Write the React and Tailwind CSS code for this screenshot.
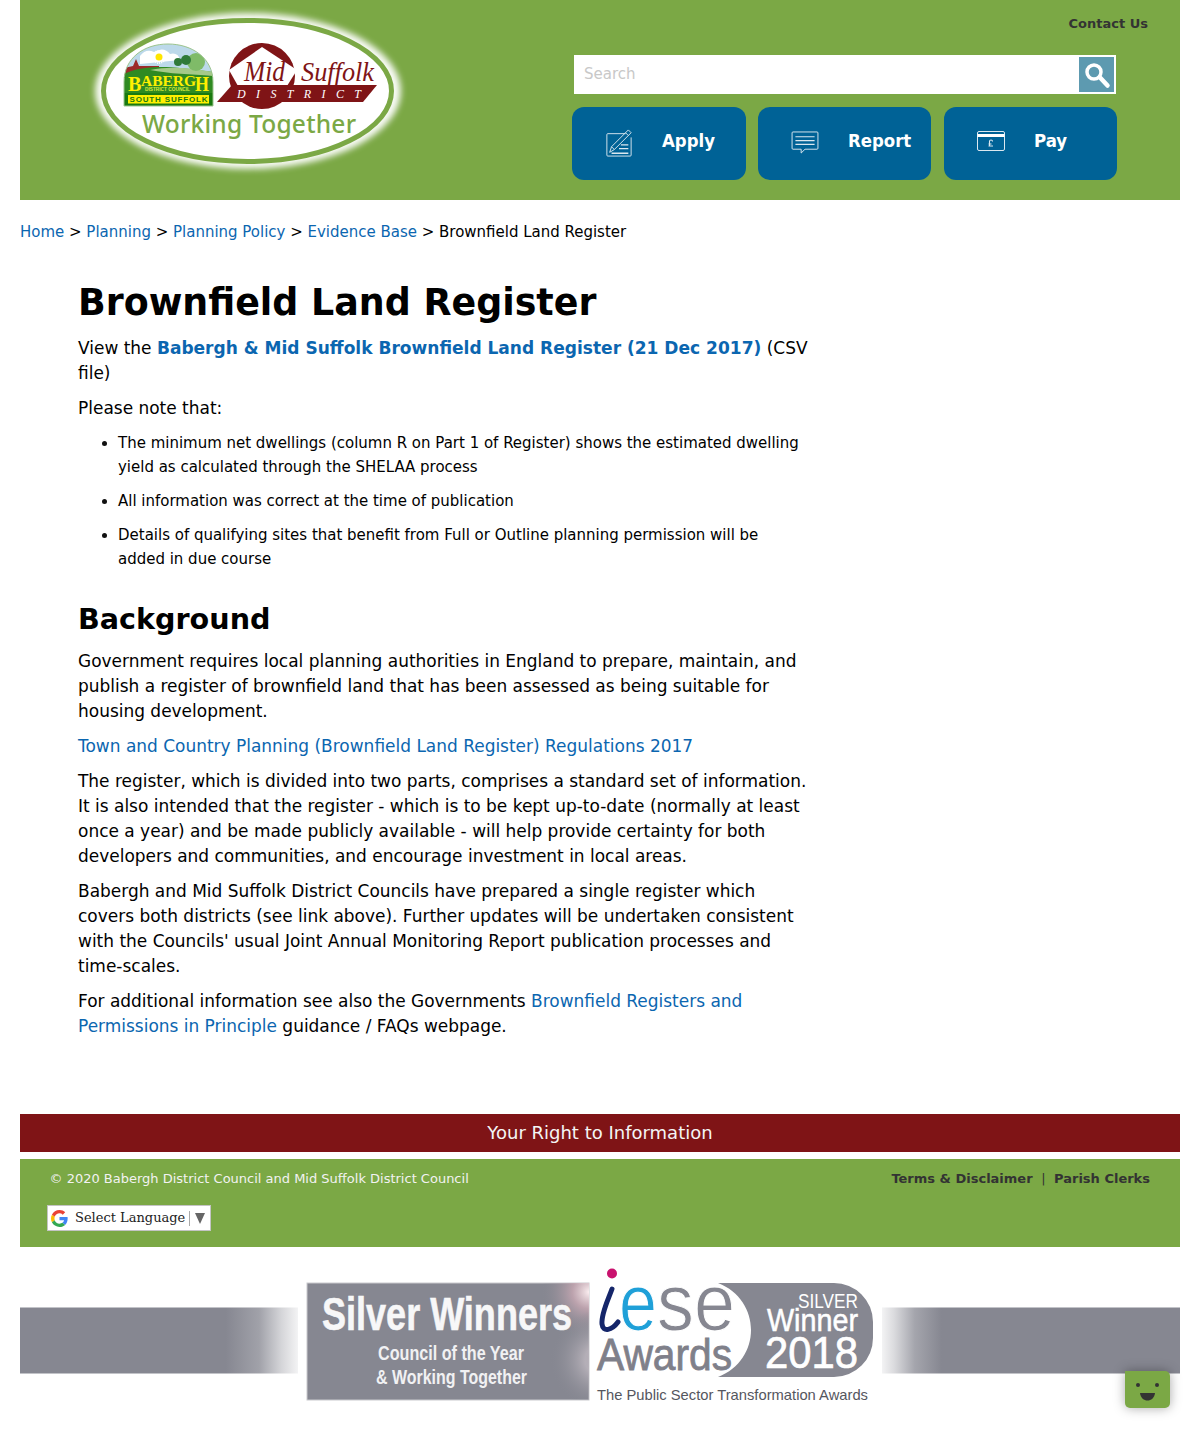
import React from "react";

function Logo() {
  const serif = "'Liberation Serif', serif";
  const sans = "'Liberation Sans', sans-serif";
  return (
    <svg width="320" height="170" viewBox="88 6 320 170" className="block">
      <defs>
        <filter id="glow" x="-10%" y="-15%" width="120%" height="130%">
          <feGaussianBlur stdDeviation="3" />
        </filter>
        <clipPath id="dome">
          <path d="M124 106 L124 82 C124 58 144 44 168 44 C192 44 213 58 213 82 L213 106 Z" />
        </clipPath>
      </defs>
      <ellipse cx="248" cy="91" rx="153" ry="78" fill="#fff" opacity="0.95" filter="url(#glow)" />
      <ellipse cx="247.5" cy="91" rx="144" ry="70.5" fill="#fff" stroke="#7ba845" strokeWidth="5" />

      {/* babergh badge */}
      <g clipPath="url(#dome)">
        <rect x="124" y="44" width="90" height="62" fill="#bcd9ea" />
        <path d="M140 56 q6 -8 14 -4 q10 -6 16 2 q8 -2 10 6 l-40 4 Z" fill="#fff" />
        <path d="M124 68 l9 -2 l3 -7 l3 7 l20 0 l0 6 l-35 6 Z" fill="#9c2a2a" />
        <path d="M124 74 C145 64 170 66 213 72 L213 106 L124 106 Z" fill="#2f8a22" />
        <path d="M150 70 C170 66 190 68 213 72 L213 76 C190 74 170 74 150 70 Z" fill="#a5c989" />
        <circle cx="196" cy="62" r="9" fill="#7fbb68" />
        <circle cx="186" cy="60" r="5" fill="#2f7a39" />
        <circle cx="178" cy="62" r="4" fill="#2f7a39" />
        <circle cx="159" cy="57" r="6" fill="none" stroke="#fff" strokeWidth="2" strokeDasharray="1 1" />
        <circle cx="159" cy="57" r="3.500" fill="#ffe600" />
        <rect x="124" y="93" width="90" height="13" fill="#197a10" />
      </g>
      <path d="M124 106 L124 82 C124 58 144 44 168 44 C192 44 213 58 213 82 L213 106 Z" fill="none" stroke="#9cc48d" strokeWidth="1" />
      <text x="128" y="91" fontFamily={serif} fontWeight="700" fontSize="20" fill="#fff000">B</text>
      <text x="141" y="86" fontFamily={serif} fontWeight="700" fontSize="15" fill="#fff000" textLength="55" lengthAdjust="spacingAndGlyphs">ABERG</text>
      <text x="195" y="91" fontFamily={serif} fontWeight="700" fontSize="20" fill="#fff000" textLength="14" lengthAdjust="spacingAndGlyphs">H</text>
      <text x="145" y="90.500" fontFamily={sans} fontWeight="700" fontSize="4.500" fill="#d9ec3a" textLength="45" lengthAdjust="spacingAndGlyphs">DISTRICT COUNCIL</text>
      <rect x="128" y="95" width="81" height="8.500" fill="#fff000" />
      <text x="129.500" y="102.200" fontFamily={sans} fontWeight="700" fontSize="8" fill="#197a10" textLength="78" lengthAdjust="spacing">SOUTH SUFFOLK</text>

      {/* mid suffolk mark */}
      <circle cx="262" cy="76" r="33" fill="#7f1416" />
      <path d="M262 47 L297 70 L287 86 L238 86 L229 70 Z" fill="#fff" />
      <text x="244" y="81" fontFamily={serif} fontStyle="italic" fontSize="29" fill="#7f1416" textLength="41" lengthAdjust="spacingAndGlyphs">Mid</text>
      <text x="301" y="81" fontFamily={serif} fontStyle="italic" fontSize="27" fill="#7f1416" textLength="73" lengthAdjust="spacingAndGlyphs">Suffolk</text>
      <path d="M217 102 L232 85 L377 85 L363 102 Z" fill="#7f1416" />
      <text x="237" y="98" fontFamily={serif} fontStyle="italic" fontSize="12" fill="#fff" textLength="124" lengthAdjust="spacing">DISTRICT</text>

      <text x="142" y="133" fontFamily="'Noto Sans', sans-serif" fontWeight="500" fontSize="24.500" fill="#7ba845" textLength="214" lengthAdjust="spacing">Working Together</text>
    </svg>
  );
}

function ApplyIcon() {
  return (
    <svg width="28" height="28" viewBox="0 0 30 30" fill="none" stroke="#dbe8f0" strokeWidth="1">
      <path d="M22 5 H3 a1 1 0 0 0 -1 1 V28 a1 1 0 0 0 1 1 H27 a1 1 0 0 0 1 -1 V9" />
      <path d="M25 1 L28 4 L10 22 L5 25 L7 19 Z" />
      <path d="M7 19 L10 22 M22 4 L25 7" />
      <path d="M17 17 H25 M15 21 H25 M7 26 H25" strokeWidth="1.4" />
    </svg>
  );
}

function ReportIcon() {
  return (
    <svg width="28" height="23" viewBox="0 0 28 24" fill="none" stroke="#dbe8f0" strokeWidth="1">
      <path d="M1.5 1 H26.5 a1 1 0 0 1 1 1 V18 a1 1 0 0 1 -1 1 H14 L10 23 V19 H1.5 a1 1 0 0 1 -1 -1 V2 a1 1 0 0 1 1 -1 Z" />
      <path d="M4 6 H24 M4 10 H24 M4 14 H24" strokeWidth="1.3" />
    </svg>
  );
}

function PayIcon() {
  return (
    <svg width="28" height="20" viewBox="0 0 28 20" fill="none" stroke="#dbe8f0" strokeWidth="1">
      <rect x="0.5" y="0.5" width="27" height="19" rx="1.5" />
      <rect x="0.5" y="3" width="27" height="3" fill="#fff" stroke="none" />
      <path d="M15.5 10.5 a1.5 1.5 0 0 0 -3 0 V15 M11.5 13 H14.5 M11.5 15 H16" strokeWidth="1.1" />
    </svg>
  );
}

function ActionButton({ label, icon, width, iconBox }) {
  return (
    <a className={`flex h-[73px] items-center rounded-xl bg-[#006296] ${width}`}>
      <span className={`flex w-[90px] items-center justify-center pl-[3px] ${iconBox}`}>{icon}</span>
      <span className="pb-[6px] text-[18.4px] font-bold text-white [font-family:'DejaVu_Sans_Condensed','DejaVu_Sans',sans-serif] [font-stretch:condensed]">
        {label}
      </span>
    </a>
  );
}

function GoogleG() {
  return (
    <svg width="17" height="17" viewBox="0 0 48 48">
      <path fill="#EA4335" d="M24 9.5c3.5 0 6.700 1.200 9.200 3.600l6.900-6.900C35.900 2.400 30.500 0 24 0 14.600 0 6.500 5.400 2.600 13.200l8 6.200C12.500 13.700 17.800 9.500 24 9.500z" />
      <path fill="#4285F4" d="M47 24.500c0-1.600-.1-3.100-.4-4.500H24v9h12.900c-.6 3-2.300 5.500-4.800 7.200l7.700 6C44.300 37.900 47 31.800 47 24.500z" />
      <path fill="#FBBC05" d="M10.600 28.600c-.5-1.400-.8-3-.8-4.600s.3-3.200.8-4.600l-8-6.200C.9 16.500 0 20.100 0 24s.9 7.500 2.600 10.800l8-6.200z" />
      <path fill="#34A853" d="M24 48c6.500 0 11.900-2.100 15.900-5.800l-7.700-6c-2.100 1.400-4.900 2.300-8.200 2.300-6.200 0-11.500-4.200-13.400-9.900l-8 6.200C6.500 42.600 14.600 48 24 48z" />
    </svg>
  );
}

function AwardsBanner() {
  const cond = "'Liberation Sans', sans-serif";
  return (
    <svg width="1160" height="194" viewBox="20 1247 1160 194" className="block">
      <defs>
        <linearGradient id="fadeL" x1="0" x2="1" y1="0" y2="0">
          <stop offset="0.74" stopColor="#868791" />
          <stop offset="0.86" stopColor="#868791" stopOpacity="0.78" />
          <stop offset="0.94" stopColor="#868791" stopOpacity="0.35" />
          <stop offset="1" stopColor="#868791" stopOpacity="0.1" />
        </linearGradient>
        <linearGradient id="fadeR" x1="1" x2="0" y1="0" y2="0">
          <stop offset="0.8" stopColor="#868791" />
          <stop offset="0.89" stopColor="#868791" stopOpacity="0.75" />
          <stop offset="0.96" stopColor="#868791" stopOpacity="0.3" />
          <stop offset="1" stopColor="#868791" stopOpacity="0.1" />
        </linearGradient>
        <radialGradient id="flare" gradientUnits="userSpaceOnUse" cx="589" cy="1292" r="48">
          <stop offset="0" stopColor="#fbeef0" />
          <stop offset="0.35" stopColor="#c9a9b4" stopOpacity="0.8" />
          <stop offset="1" stopColor="#868791" stopOpacity="0" />
        </radialGradient>
        <radialGradient id="flare2" gradientUnits="userSpaceOnUse" cx="600" cy="1360" r="50">
          <stop offset="0.3" stopColor="#b9b3bb" stopOpacity="0.9" />
          <stop offset="1" stopColor="#868791" stopOpacity="0" />
        </radialGradient>
      </defs>
      <rect x="20" y="1307.500" width="278" height="66" fill="url(#fadeL)" />
      <rect x="882" y="1307.500" width="298" height="66" fill="url(#fadeR)" />

      <rect x="307" y="1283" width="282" height="117" fill="#868791" stroke="#c9c9cd" strokeWidth="1" />
      <rect x="307" y="1283" width="282" height="117" fill="url(#flare)" />
      <rect x="307" y="1283" width="282" height="117" fill="url(#flare2)" />
      <text x="322" y="1330" fontFamily={cond} fontWeight="700" fontSize="46" fill="#f7f7f8" stroke="#f7f7f8" strokeWidth="0.6" textLength="250" lengthAdjust="spacingAndGlyphs">Silver Winners</text>
      <text x="378" y="1360" fontFamily={cond} fontWeight="700" fontSize="20" fill="#f1f1f3" textLength="146" lengthAdjust="spacingAndGlyphs">Council of the Year</text>
      <text x="376" y="1384" fontFamily={cond} fontWeight="700" fontSize="20" fill="#f1f1f3" textLength="151" lengthAdjust="spacingAndGlyphs">&amp; Working Together</text>

      <circle cx="612" cy="1273.500" r="5" fill="#c9126e" />
      <path d="M718 1283 H834 a39 39 0 0 1 39 39 V1338 a39 39 0 0 1 -39 39 H718 C762 1360 762 1300 718 1283 Z" fill="#868791" />
      <path d="M612 1289 C608 1300 601 1314 602 1324 C603 1333 612 1330 618 1322" fill="none" stroke="#15266a" strokeWidth="5" strokeLinecap="round" />
      <text x="619" y="1330" fontFamily={cond} fontSize="80" fill="#1fa0d8" stroke="#fff" strokeWidth="1" textLength="38" lengthAdjust="spacingAndGlyphs">e</text>
      <text x="657" y="1330" fontFamily={cond} fontSize="80" fill="#868791" stroke="#fff" strokeWidth="1" textLength="78" lengthAdjust="spacingAndGlyphs">se</text>
      <text x="597" y="1370" fontFamily={cond} fontSize="44" fill="#7f808a" stroke="#7f808a" strokeWidth="0.8" textLength="135" lengthAdjust="spacingAndGlyphs">Awards</text>

      <text x="798" y="1308" fontFamily={cond} fontSize="20" fill="#fff" textLength="60" lengthAdjust="spacingAndGlyphs">SILVER</text>
      <text x="767" y="1331" fontFamily={cond} fontSize="31" fill="#fff" stroke="#fff" strokeWidth="0.5" textLength="91" lengthAdjust="spacingAndGlyphs">Winner</text>
      <text x="765" y="1368" fontFamily={cond} fontSize="44" fill="#fff" stroke="#fff" strokeWidth="0.7" textLength="93" lengthAdjust="spacingAndGlyphs">2018</text>
      <text x="597" y="1400" fontFamily={cond} fontSize="14.500" fill="#55565e" textLength="271" lengthAdjust="spacingAndGlyphs">The Public Sector Transformation Awards</text>
    </svg>
  );
}

function ChatBubble() {
  return (
    <div className="fixed bottom-[33px] right-[30px] h-[37px] w-[45px] rounded-[5px] rounded-tl-none bg-[#7ba845] shadow-[0_0_12px_rgba(0,0,0,0.35)]">
      <svg width="45" height="37" viewBox="0 0 45 37">
        <circle cx="13" cy="14" r="2" fill="#333" />
        <circle cx="32" cy="14" r="2" fill="#333" />
        <path d="M15 22 H30 C29 32 16 32 15 22 Z" fill="#333" />
      </svg>
    </div>
  );
}

export default function App() {
  const link = "text-[#0b66b0]";
  return (
    <div className="relative mx-5 h-[1441px] overflow-hidden bg-white text-black [font-family:'DejaVu_Sans',sans-serif]">
      <header className="flex h-[200px] bg-[#7ba845]">
        <div className="w-[552px] shrink-0 pl-[68px] pt-[6px]">
          <Logo />
        </div>
        <div className="flex flex-1 flex-col">
          <a className="mt-[16px] self-end pr-[32px] text-[13px] font-bold leading-[16px] text-[#333]">Contact Us</a>
          <div className="ml-[2px] mt-[23px] flex h-[39px] w-[542px] items-center justify-between border-2 border-white bg-white">
            <span className="pb-[1px] pl-[8px] text-[15px] text-[#c8c8c8]">Search</span>
            <span className="flex h-[35px] w-[35px] items-center justify-center bg-[#5d9ab0]">
              <svg width="28" height="28" viewBox="0 0 28 28" fill="none" stroke="#fff">
                <circle cx="11" cy="11" r="7" strokeWidth="3.5" />
                <path d="M17 16.500 L24.500 24.500" strokeWidth="4.500" strokeLinecap="round" />
              </svg>
            </span>
          </div>
          <div className="mt-[13px] flex">
            <ActionButton label="Apply" icon={<ApplyIcon />} width="w-[174px]" iconBox="pb-[2px]" />
            <ActionButton label="Report" icon={<ReportIcon />} width="ml-[12px] w-[173px]" iconBox="pb-[3px]" />
            <ActionButton label="Pay" icon={<PayIcon />} width="ml-[13px] w-[173px]" iconBox="pb-[6px]" />
          </div>
        </div>
      </header>

      <nav className="mt-[23px] text-[14.990px] leading-[19px]">
        <a className={link}>Home</a> &gt; <a className={link}>Planning</a> &gt; <a className={link}>Planning Policy</a> &gt;{" "}
        <a className={link}>Evidence Base</a> &gt; Brownfield Land Register
      </nav>

      <main className="ml-[58px] mt-[38px] w-[732px] text-[16.980px] leading-[25px]">
        <h1 className="mb-[10px] text-[36.400px] font-bold leading-[46px]">Brownfield Land Register</h1>
        <p className="mb-[10px]">
          View the <a className={`text-[17.040px] font-bold ${link}`}>Babergh &amp; Mid Suffolk Brownfield Land Register (21 Dec 2017)</a> (CSV file)
        </p>
        <p className="mb-[10px]">Please note that:</p>
        <ul className="mb-[30px] list-disc pl-[40px] pr-[6px] text-[14.990px] leading-[24px] marker:text-[#111]">
          <li className="mb-[10px]">
            The minimum net dwellings (column R on Part 1 of Register) shows the estimated dwelling yield as calculated through the SHELAA process
          </li>
          <li className="mb-[10px]">All information was correct at the time of publication</li>
          <li>Details of qualifying sites that benefit from Full or Outline planning permission will be added in due course</li>
        </ul>
        <h2 className="mb-[11px] text-[28.600px] font-bold leading-[37px]">Background</h2>
        <p className="mb-[10px]">
          Government requires local planning authorities in England to prepare, maintain, and publish a register of brownfield land that has been assessed as being suitable for housing development.
        </p>
        <p className="mb-[10px]">
          <a className={link}>Town and Country Planning (Brownfield Land Register) Regulations 2017</a>
        </p>
        <p className="mb-[10px]">
          The register, which is divided into two parts, comprises a standard set of information. It is also intended that the register - which is to be kept up-to-date (normally at least once a year) and be made publicly available - will help provide certainty for both developers and communities, and encourage investment in local areas.
        </p>
        <p className="mb-[10px]">
          Babergh and Mid Suffolk District Councils have prepared a single register which covers both districts (see link above). Further updates will be undertaken consistent with the Councils' usual Joint Annual Monitoring Report publication processes and time-scales.
        </p>
        <p>
          For additional information see also the Governments <a className={link}>Brownfield Registers and Permissions in Principle</a> guidance / FAQs webpage.
        </p>
      </main>

      <div className="mt-[75px] flex h-[38px] items-center justify-center bg-[#7f1416] pb-[2px] text-[18px] text-[#f4f4f4]">
        Your Right to Information
      </div>

      <footer className="mt-[7px] h-[88px] bg-[#7ba845] pl-[29.500px] pr-[30px] pt-[11px]">
        <div className="flex justify-between text-[13px] leading-[17px]">
          <span className="text-[#f2f2f2]">© 2020 Babergh District Council and Mid Suffolk District Council</span>
          <span className="font-bold text-[#333]">
            Terms &amp; Disclaimer <span className="px-[4px] font-normal">|</span> Parish Clerks
          </span>
        </div>
        <div className="-ml-[2.500px] mt-[18px] flex h-[26px] w-[164px] items-center border border-[#c4c4c4] bg-white pl-[3px] text-[13px] text-[#222] [font-family:'DejaVu_Serif',serif]">
          <GoogleG />
          <span className="ml-[7px]">Select Language</span>
          <span className="ml-[4px] h-[15px] border-l border-[#aaa]" />
          <span className="ml-[5px] h-0 w-0 border-x-[5px] border-t-[11px] border-x-transparent border-t-[#666]" />
        </div>
      </footer>

      <AwardsBanner />
      <ChatBubble />
    </div>
  );
}
